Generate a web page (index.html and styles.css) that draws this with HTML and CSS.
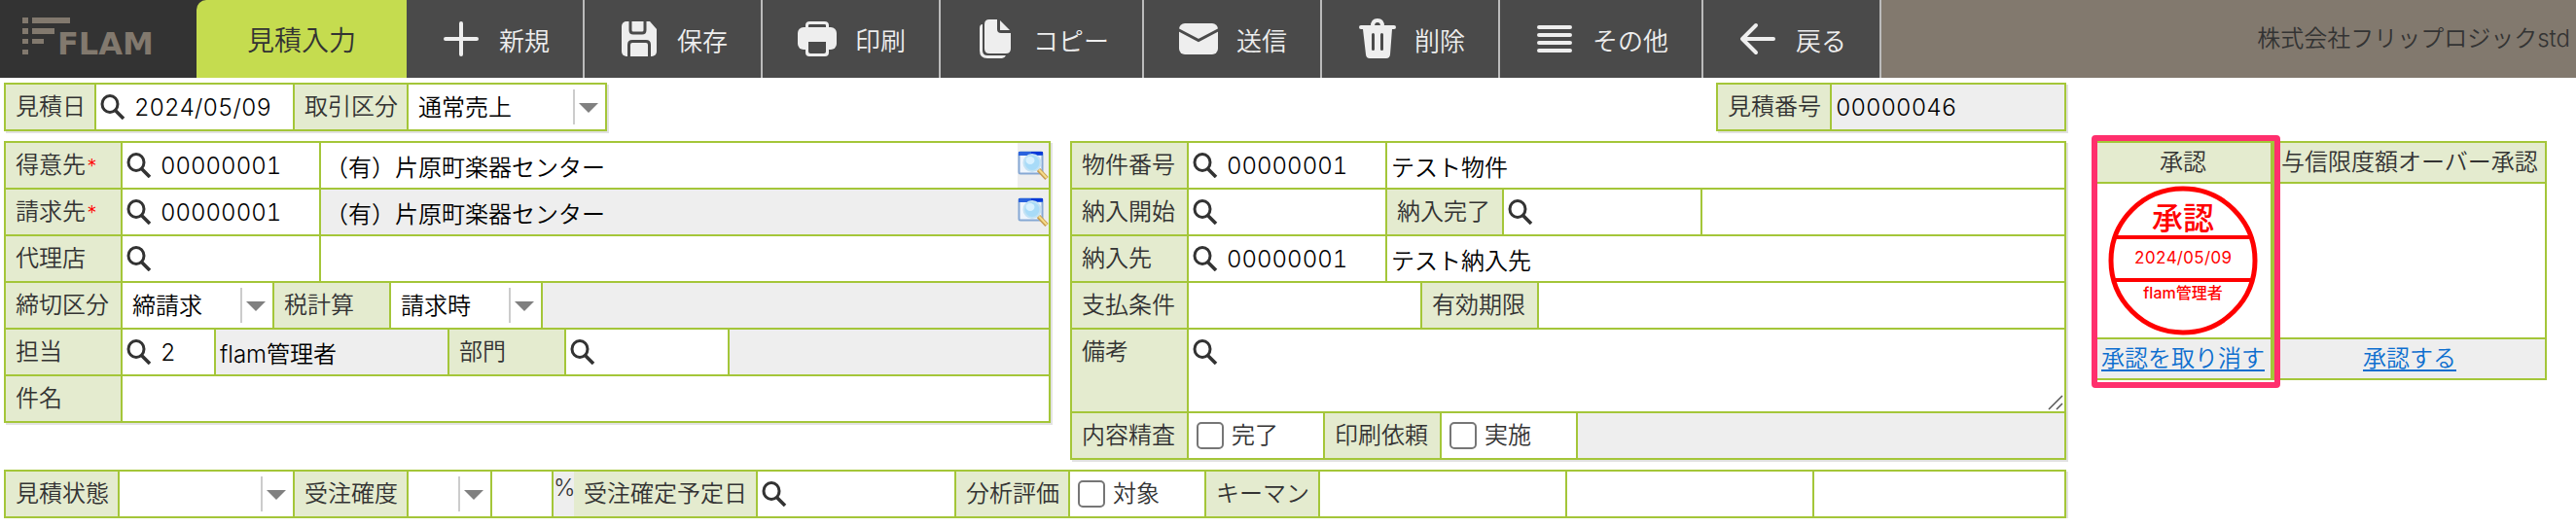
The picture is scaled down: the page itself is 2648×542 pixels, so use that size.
FILE: index.html
```html
<!DOCTYPE html>
<html lang="ja">
<head>
<meta charset="utf-8">
<title>見積入力</title>
<link rel="stylesheet" href="styles.css">
</head>
<body>
<svg class="defs" aria-hidden="true">
  <symbol id="search" viewBox="0 0 26 26">
    <ellipse cx="10" cy="10" rx="8" ry="8.4" fill="none" stroke="#333" stroke-width="3"/>
    <path d="M15.5 16.5L24 25" fill="none" stroke="#333" stroke-width="3.6"/>
  </symbol>
  <symbol id="detail" viewBox="0 0 32 32">
    <rect x="1.5" y="2.5" width="24" height="22" rx="1.5" fill="#eef5fd" stroke="#86a8d4" stroke-width="2"/>
    <path d="M1 2h25v4H1z" fill="#2a62dd"/>
    <path d="M14 2h12v3H14z" fill="#0838d8"/>
    <circle cx="15" cy="13.500" r="8.500" fill="#a8dbf8" stroke="#c3e2f4" stroke-width="2"/>
    <ellipse cx="13" cy="11" rx="4.500" ry="4" fill="#d8f1ff"/>
    <path d="M21.500 20.500L30 29.500" stroke="#c79a4e" stroke-width="4.600"/>
    <path d="M22 20.500L30 29" stroke="#f6dc8a" stroke-width="2"/>
  </symbol>
</svg>

<header class="header">
  <div class="logo">
    <svg class="logo-art" viewBox="0 0 202 80" role="img" aria-label="FLAM">
      <g fill="#82796e">
        <path d="M23 18h6v6h-6zM33 18h39v6H33zM23 29h6v6h-6zM33 29h23v6H33zM23 40h6v5h-6zM33 40h12v5H33zM23 51h6v5h-6z"/>
        <text class="logo-text" x="59" y="56">FLAM</text>
      </g>
    </svg>
  </div>
  <h1 class="title">見積入力</h1>
  <nav class="tools">
    <button class="tool" type="button">
      <svg class="tool-icon" viewBox="0 0 40 40"><path d="M20 4v32M4 20h32" stroke="#eee" stroke-width="4" stroke-linecap="round"/></svg>新規</button>
    <button class="tool" type="button">
      <svg class="tool-icon" viewBox="0 0 40 40"><path d="M7 2h24l7 8v23a5 5 0 0 1-5 5H7a5 5 0 0 1-5-5V7a5 5 0 0 1 5-5z" fill="#eee"/><path d="M11 2v9q0 3 3 3h9q3 0 3-3V2M9.500 38V26q0-3.500 3.500-3.500h14q3.500 0 3.500 3.500v12" fill="none" stroke="#4a4a4a" stroke-width="3"/></svg>保存</button>
    <button class="tool" type="button">
      <svg class="tool-icon" viewBox="0 0 40 40"><path d="M9.500 9V6q0-2.500 3-2.500h15q3 0 3 2.500v3" fill="none" stroke="#eee" stroke-width="3"/><rect y="8" width="40" height="23" rx="6" fill="#eee"/><rect x="8" y="20" width="24" height="18" rx="4" fill="#eee"/><path d="M11 23h18v10q0 2-2 2H13q-2 0-2-2z" fill="#4a4a4a"/></svg>印刷</button>
    <button class="tool" type="button">
      <svg class="tool-icon" viewBox="0 0 40 40"><path d="M7 5q-3 0-3 4v23q0 8 8 8h15q2.500 0 4-3H12q-5 0-5-5z" fill="#eee"/><path d="M14 0h8v10q0 4 4 4h10v16q0 5-5 5H14q-5 0-5-5V5q0-5 5-5z" fill="#eee"/><path d="M25 1l10 10H25z" fill="#eee"/></svg>コピー</button>
    <button class="tool" type="button">
      <svg class="tool-icon" viewBox="0 0 40 40"><rect y="4" width="40" height="32" rx="6" fill="#eee"/><path d="M-1 10.500L20 21.500l21-11" fill="none" stroke="#4a4a4a" stroke-width="3"/></svg>送信</button>
    <button class="tool" type="button">
      <svg class="tool-icon" viewBox="0 0 40 40"><path d="M16 7q0-6 5-6t5 6" fill="none" stroke="#eee" stroke-width="4"/><path d="M4 6h34q2 0 2 2t-2 2h-2l-2 26q-.4 4-4 4H13q-3.600 0-4-4L6 10H4q-2 0-2-2t2-2z" fill="#eee"/><path d="M16.500 15.500v15M25.500 15.500v15" stroke="#4a4a4a" stroke-width="3" stroke-linecap="round"/></svg>削除</button>
    <button class="tool" type="button">
      <svg class="tool-icon" viewBox="0 0 40 40"><path d="M4 8h32M4 16h32M4 24h32M4 32h32" stroke="#eee" stroke-width="4" stroke-linecap="round"/></svg>その他</button>
    <button class="tool" type="button">
      <svg class="tool-icon" viewBox="0 0 40 40"><path d="M18 6L4 20l14 14M5 20h31" fill="none" stroke="#eee" stroke-width="4" stroke-linecap="round" stroke-linejoin="round"/></svg>戻る</button>
  </nav>
  <p class="company">株式会社フリップロジックstd</p>
</header>

<main class="page">
  <form class="form">
    <div class="top">
      <div class="panel">
        <div class="row">
          <label class="label w91" for="date">見積日</label>
          <div class="cell w202"><svg class="search"><use href="#search"/></svg><input class="input" id="date" value="2024/05/09"></div>
          <label class="label w115" for="deal">取引区分</label>
          <div class="cell w202 drop"><select class="select" id="deal"><option>通常売上</option></select></div>
        </div>
      </div>
      <div class="panel">
        <div class="row">
          <label class="label w115" for="number">見積番号</label>
          <div class="cell w239 gray"><input class="input" id="number" value="00000046" readonly></div>
        </div>
      </div>
    </div>

    <div class="columns">
      <div class="panel">
        <div class="row">
          <label class="label w118" for="customer">得意先<span class="must">*</span></label>
          <div class="cell w202"><svg class="search"><use href="#search"/></svg><input class="input" id="customer" value="00000001"></div>
          <div class="cell rest"><input class="input" aria-label="得意先名" value="（有）片原町楽器センター"><button class="detail" type="button" aria-label="得意先の詳細"><svg class="detail-icon"><use href="#detail"/></svg></button></div>
        </div>
        <div class="row">
          <label class="label w118" for="billing">請求先<span class="must">*</span></label>
          <div class="cell w202"><svg class="search"><use href="#search"/></svg><input class="input" id="billing" value="00000001"></div>
          <div class="cell rest gray"><input class="input" aria-label="請求先名" value="（有）片原町楽器センター" readonly><button class="detail" type="button" aria-label="請求先の詳細"><svg class="detail-icon"><use href="#detail"/></svg></button></div>
        </div>
        <div class="row">
          <label class="label w118" for="agent">代理店</label>
          <div class="cell w202"><svg class="search"><use href="#search"/></svg><input class="input" id="agent"></div>
          <div class="cell rest"><input class="input" aria-label="代理店名"></div>
        </div>
        <div class="row">
          <label class="label w118" for="closing">締切区分</label>
          <div class="cell w154 drop"><select class="select" id="closing"><option>締請求</option></select></div>
          <label class="label w118" for="tax">税計算</label>
          <div class="cell w154 drop"><select class="select" id="tax"><option>請求時</option></select></div>
          <div class="cell rest gray"></div>
        </div>
        <div class="row">
          <label class="label w118" for="staff">担当</label>
          <div class="cell w94"><svg class="search"><use href="#search"/></svg><input class="input" id="staff" value="2"></div>
          <div class="cell w238 gray"><input class="input" aria-label="担当者名" value="flam管理者" readonly></div>
          <label class="label w118" for="section">部門</label>
          <div class="cell w166"><svg class="search"><use href="#search"/></svg><input class="input" id="section"></div>
          <div class="cell rest gray"></div>
        </div>
        <div class="row">
          <label class="label w118" for="subject">件名</label>
          <div class="cell rest"><input class="input" id="subject"></div>
        </div>
      </div>

      <div class="panel">
        <div class="row">
          <label class="label w118" for="project">物件番号</label>
          <div class="cell w202"><svg class="search"><use href="#search"/></svg><input class="input" id="project" value="00000001"></div>
          <div class="cell rest"><input class="input" aria-label="物件名" value="テスト物件"></div>
        </div>
        <div class="row">
          <label class="label w118" for="start">納入開始</label>
          <div class="cell w202"><svg class="search"><use href="#search"/></svg><input class="input" id="start"></div>
          <label class="label w118" for="finish">納入完了</label>
          <div class="cell w202"><svg class="search"><use href="#search"/></svg><input class="input" id="finish"></div>
          <div class="cell rest"><input class="input" aria-label="納入メモ"></div>
        </div>
        <div class="row">
          <label class="label w118" for="place">納入先</label>
          <div class="cell w202"><svg class="search"><use href="#search"/></svg><input class="input" id="place" value="00000001"></div>
          <div class="cell rest"><input class="input" aria-label="納入先名" value="テスト納入先"></div>
        </div>
        <div class="row">
          <label class="label w118" for="terms">支払条件</label>
          <div class="cell w238"><input class="input" id="terms"></div>
          <label class="label w118" for="expiry">有効期限</label>
          <div class="cell rest"><input class="input" id="expiry"></div>
        </div>
        <div class="row tall">
          <label class="label w118" for="remarks">備考</label>
          <div class="cell rest"><svg class="search"><use href="#search"/></svg><textarea class="area" id="remarks"></textarea><svg class="grip" viewBox="0 0 16 16"><path d="M1 15L15 1M9 15l6-6" fill="none" stroke="#555" stroke-width="1.500"/></svg></div>
        </div>
        <div class="row">
          <span class="label w118">内容精査</span>
          <label class="cell w138 tick"><input class="box" type="checkbox">完了</label>
          <span class="label w118">印刷依頼</span>
          <label class="cell w138 tick"><input class="box" type="checkbox">実施</label>
          <div class="cell rest gray"></div>
        </div>
      </div>
    </div>

    <div class="panel">
      <div class="row">
        <label class="label w115" for="state">見積状態</label>
        <div class="cell w178 drop"><select class="select" id="state"><option></option></select></div>
        <label class="label w115" for="chance">受注確度</label>
        <div class="cell w84 drop"><select class="select" id="chance"><option></option></select></div>
        <div class="cell w61"><input class="input" aria-label="受注確度の率"></div>
        <div class="pair">
          <span class="percent">%</span>
          <label class="label w187" for="fixed">受注確定予定日</label>
        </div>
        <div class="cell w202"><svg class="search"><use href="#search"/></svg><input class="input" id="fixed"></div>
        <span class="label w115">分析評価</span>
        <label class="cell w138 tick"><input class="box" type="checkbox">対象</label>
        <label class="label w115" for="key1">キーマン</label>
        <div class="cell w252"><input class="input" id="key1"></div>
        <div class="cell w252"><input class="input" aria-label="キーマン2"></div>
        <div class="cell rest"><input class="input" aria-label="キーマン3"></div>
      </div>
    </div>
  </form>

  <aside class="approvals">
    <section class="approval focus">
      <h2 class="approval-head">承認</h2>
      <div class="approval-body">
        <svg class="stamp" viewBox="0 0 154 154" role="img" aria-label="承認 2024/05/09 flam管理者">
          <g fill="none" stroke="#f00">
            <circle cx="77" cy="77" r="74" stroke-width="5"/>
            <path d="M8 53h138M5 97h144" stroke-width="4"/>
          </g>
          <g class="stamp-text">
            <text class="stamp-title" x="77" y="45">承認</text>
            <text class="stamp-date" x="77" y="80">2024/05/09</text>
            <text class="stamp-name" x="77" y="116">flam管理者</text>
          </g>
        </svg>
      </div>
      <p class="approval-foot"><a class="link" href="#">承認を取り消す</a></p>
    </section>
    <section class="approval wide">
      <h2 class="approval-head">与信限度額オーバー承認</h2>
      <div class="approval-body"></div>
      <p class="approval-foot"><a class="link" href="#">承認する</a></p>
    </section>
  </aside>
</main>
</body>
</html>
```

FILE: styles.css
```css
* {
  box-sizing: border-box;
}

body,
h1,
h2,
p {
  margin: 0;
}

body,
button,
input,
select,
textarea {
  font-family: Inter, "Noto Sans CJK JP", sans-serif;
  font-size: 24px;
  font-weight: 350;
  font-variant-numeric: tabular-nums;
}

body {
  background: #fff;
  color: #333;
}

.defs {
  position: absolute;
  width: 0;
  height: 0;
}

/* Header */

.header {
  display: flex;
  height: 80px;
  background: linear-gradient(to right, #333 300px, #82796e 300px);
}

.logo {
  width: 202px;
}

.logo-art {
  display: block;
  width: 202px;
  height: 80px;
}

.logo-text {
  font-family: "DejaVu Sans", sans-serif;
  font-size: 32px;
  font-weight: 700;
}

.title {
  display: flex;
  align-items: center;
  justify-content: center;
  width: 216px;
  border-top-left-radius: 10px;
  background: #c5dc4f;
  font-size: 28px;
  font-weight: 350;
}

.tools {
  display: flex;
}

.tool {
  display: flex;
  align-items: center;
  gap: 19px;
  padding: 0 34px 0 36px;
  border: 0;
  border-right: 2px solid #bbb;
  background: #4a4a4a;
  color: #eee;
  font-size: 26px;
}

.tool-icon {
  width: 40px;
  height: 40px;
  overflow: visible;
}

.company {
  flex: 1;
  padding-right: 6px;
  line-height: 80px;
  text-align: right;
}

/* Page */

.page {
  display: flex;
  gap: 28px;
  padding: 5px 30px 0 4px;
}

.form {
  flex: 1;
  display: flex;
  flex-direction: column;
  gap: 10px;
  min-width: 0;
}

.top {
  display: flex;
  justify-content: space-between;
}

.columns {
  display: grid;
  grid-template-columns: 1076fr 1024fr;
  align-items: start;
  gap: 20px;
}

.panel {
  display: flex;
  flex-direction: column;
  gap: 2px;
  padding: 2px;
  background: #a4c639;
  box-shadow: 2px 2px 0 #e2e2e2;
}

.row {
  display: flex;
  gap: 2px;
  height: 46px;
}

.tall {
  height: 84px;
}

.label {
  flex: none;
  padding-left: 10px;
  background: #e4ebcf;
  line-height: 46px;
  white-space: nowrap;
}

.must {
  color: #f00;
  font-size: 20px;
}

.cell {
  position: relative;
  display: flex;
  flex: none;
  min-width: 0;
  background: #fff;
}

.rest {
  flex: 1;
}

.gray {
  background: #eee;
}

.w61 { width: 61px; }
.w84 { width: 84px; }
.w91 { width: 91px; }
.w94 { width: 94px; }
.w115 { width: 115px; }
.w118 { width: 118px; }
.w138 { width: 138px; }
.w154 { width: 154px; }
.w166 { width: 166px; }
.w178 { width: 178px; }
.w187 { width: 187px; }
.w202 { width: 202px; }
.w238 { width: 238px; }
.w239 { width: 239px; }
.w252 { width: 252px; }

.search {
  flex: none;
  width: 26px;
  height: 26px;
  margin: 10px 5px 0 4px;
}

.input {
  flex: 1;
  width: 0;
  min-width: 0;
  padding: 0 4px;
  border: 0;
  outline: 0;
  background: transparent;
  color: #000;
}

.detail {
  display: flex;
  align-items: center;
  width: 32px;
  padding: 0;
  border: 0;
  background: #eee;
}

.detail-icon {
  width: 32px;
  height: 32px;
}

.drop::before {
  content: "";
  position: absolute;
  top: 5px;
  right: 31px;
  width: 2px;
  height: 36px;
  background: #ccc;
}

.drop::after {
  content: "";
  position: absolute;
  top: 19px;
  right: 7px;
  border: 10px solid transparent;
  border-top-color: #808080;
  border-bottom: 0;
  pointer-events: none;
}

.select {
  width: 100%;
  padding: 0 10px;
  border: 0;
  background: transparent;
  color: #000;
  appearance: none;
}

.area {
  flex: 1;
  width: 0;
  padding: 8px 4px;
  border: 0;
  outline: 0;
  resize: none;
}

.grip {
  position: absolute;
  right: 1px;
  bottom: 1px;
  width: 16px;
  height: 16px;
  pointer-events: none;
}

.tick {
  gap: 8px;
  padding-left: 8px;
  line-height: 46px;
}

.box {
  width: 28px;
  height: 28px;
  margin: 9px 0 0;
  border: 2px solid #767676;
  border-radius: 5px;
  background: #fff;
  appearance: none;
}

.pair {
  display: flex;
}

.percent {
  width: 21px;
  background: #eee;
  line-height: 34px;
}

/* Approvals */

.approvals {
  display: flex;
  flex: none;
  align-items: flex-start;
  padding-top: 60px;
}

.approval {
  position: relative;
  width: 184px;
  border: 2px solid #a4c639;
  text-align: center;
}

.wide {
  width: 282px;
}

.focus::after {
  content: "";
  position: absolute;
  z-index: 1;
  top: -8px;
  right: -10px;
  bottom: -10px;
  left: -4px;
  border: 6px solid #ff2f6d;
  border-radius: 4px;
}

.approval-head {
  background: #e4ebcf;
  font-size: 24px;
  font-weight: 350;
  line-height: 40px;
}

.approval-body {
  height: 162px;
  padding-top: 2px;
  border: solid #a4c639;
  border-width: 2px 0;
}

.stamp {
  width: 154px;
  height: 154px;
}

.stamp-text {
  fill: #f00;
  font-weight: 400;
  text-anchor: middle;
}

.stamp-title {
  font-size: 32px;
  font-weight: 500;
}

.stamp-date {
  font-size: 17px;
}

.stamp-name {
  font-size: 16px;
  font-weight: 500;
}

.approval-foot {
  background: #eee;
  line-height: 40px;
}

.link {
  color: #0d6ecf;
  text-decoration-thickness: 2px;
  text-underline-offset: 3px;
}
```
